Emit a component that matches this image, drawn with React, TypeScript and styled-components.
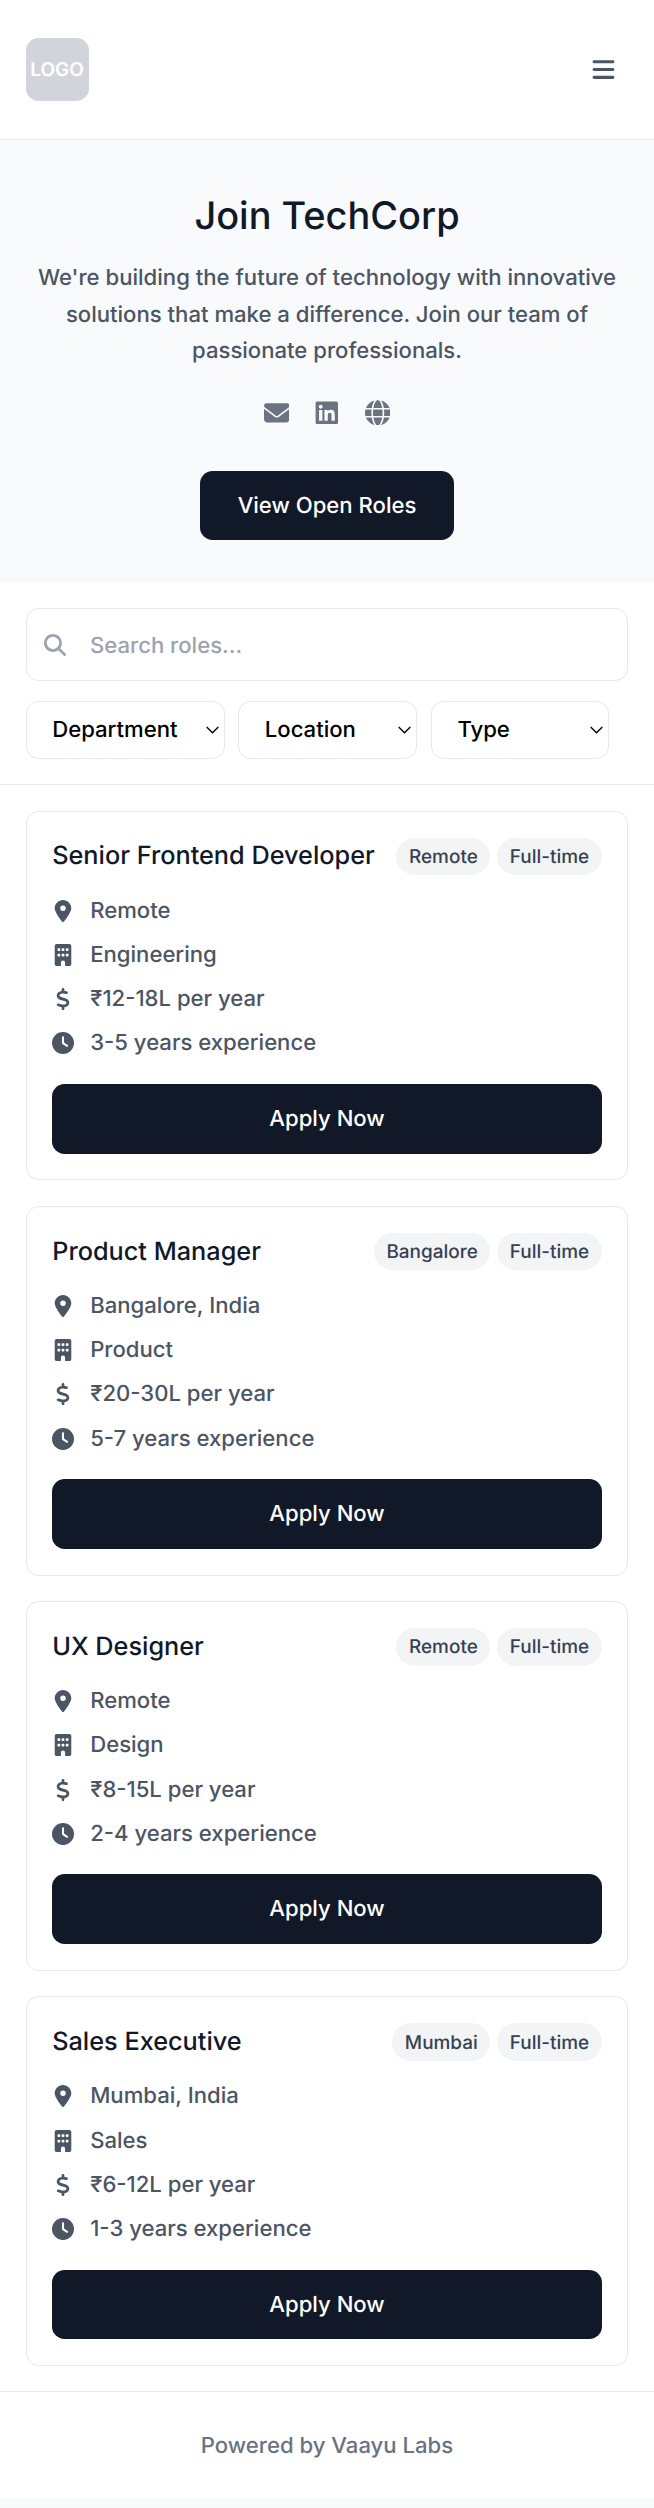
import React from 'react';
import styled, { createGlobalStyle } from 'styled-components';
import { FaBars, FaEnvelope, FaLinkedin, FaGlobe, FaMagnifyingGlass, FaLocationDot, FaBuilding, FaDollarSign, FaClock } from 'react-icons/fa6';

const Global = createGlobalStyle`
  html, body { margin: 0; padding: 0; background: #f9fafb; }
  body { font-family: Inter, "Noto Sans", sans-serif; min-height: 2508px; text-rendering: geometricPrecision; }
  * { box-sizing: border-box; }
`;
const Page = styled.div`background: #fff; width: 654px;`;
const Header = styled.header`
  height: 140px; padding: 38px 25.6px; display: flex; align-items: center; justify-content: space-between;
  border-bottom: 1.6px solid #e5e7eb;
`;
const Logo = styled.div`
  width: 63px; height: 63px; border-radius: 12.6px; background: #d1d5db; color: #fff;
  display: flex; align-items: center; justify-content: center; font-size: 18.96px; font-weight: 600; overflow: hidden;
`;
const MenuButton = styled.button`
  background: none; border: 0; padding: 0; color: #4b5563; display: flex; font-size: 25px; margin-right: 12px;
`;
const Hero = styled.section`
  background: #f9fafb; padding: 51.2px 25.6px 42.4px; text-align: center;
`;
const Title = styled.h1`
  margin: 0 0 17.6px; font-size: 37.92px; line-height: 51.2px; font-weight: 500; color: #111827;
`;
const Lead = styled.p`
  margin: 0 0 30px; font-size: 22.12px; line-height: 36.6px; font-weight: 500; color: #4b5563;
`;
const Socials = styled.div`
  display: flex; justify-content: center; gap: 25px; color: #6b7280; font-size: 25.6px; margin-bottom: 46px;
  svg { display: block; }
`;
const PrimaryLink = styled.a`
  display: flex; align-items: center; justify-content: center; height: 69px; width: 254px; margin: 0 auto;
  background: #111827; color: #fff; border-radius: 12.6px; font-size: 22.12px; font-weight: 550;
`;
const Filters = styled.section`
  padding: 25.6px; border-bottom: 1.6px solid #e5e7eb; display: flex; flex-direction: column; gap: 20px;
`;
const SearchBox = styled.div`
  height: 72.6px; border: 1.6px solid #e5e7eb; border-radius: 12.6px; display: flex; align-items: center;
  padding: 0 17px; gap: 24.4px; color: #9ca3af; font-size: 22px; background: #fff;
`;
const SearchInput = styled.input`
  flex: 1; border: 0; outline: 0; padding: 2px 0 0; font: 500 22.12px Inter, sans-serif; background: transparent;
  text-rendering: geometricPrecision;
  &::placeholder { color: #9ca3af; opacity: 1; }
`;
const SelectRow = styled.div`display: flex; gap: 13.6px;`;
const SelectWrap = styled.div<{ $w: number }>`
  position: relative; width: ${(p) => p.$w}px; height: 57.6px;
`;
const Select = styled.select`
  appearance: none; width: 100%; height: 100%; padding: 0 0 0 25.6px; border: 1.6px solid #e5e7eb; border-radius: 12.6px;
  background: #fff; color: #000; font: 500 22.12px Inter, sans-serif; text-rendering: geometricPrecision;
`;
const Chevron = styled.svg`
  position: absolute; right: 6px; top: 25px; width: 13px; height: 8px; pointer-events: none;
`;
const List = styled.main`
  padding: 25.6px; display: flex; flex-direction: column; gap: 25.6px;
`;
const Card = styled.article`
  border: 1.6px solid #e5e7eb; border-radius: 12.6px; padding: 25.6px; height: 369.6px; display: flex; flex-direction: column;
`;
const CardTop = styled.div`display: flex; justify-content: space-between; align-items: center; margin-bottom: 19.3px;`;
const CardTitle = styled.h2`margin: 0; padding-top: 1px; font-size: 25.28px; line-height: 37.4px; font-weight: 500; color: #111827;`;
const Tags = styled.div`display: flex; gap: 6.8px;`;
const Tag = styled.span`
  height: 37.4px; padding: 0 12.64px; display: flex; align-items: center; border-radius: 19px; background: #f3f4f6;
  color: #374151; font-size: 18.96px; font-weight: 500;
`;
const Rows = styled.div`display: flex; flex-direction: column; gap: 12.8px; margin-bottom: 25.1px;`;
const Row = styled.div`
  display: flex; align-items: center; gap: 16px; height: 31.4px; padding-top: 0.4px; font-size: 22.12px; font-weight: 500; color: #4b5563;
`;
const IconSlot = styled.span`width: 22px; display: flex; justify-content: flex-start; font-size: 22.12px; svg { display: block; }`;
const ApplyButton = styled.button`
  height: 69.8px; border: 0; width: 100%; background: #111827; color: #fff; border-radius: 12.6px;
  font: 550 22.12px Inter, sans-serif; flex: none; text-rendering: geometricPrecision;
`;
const Footer = styled.footer`
  border-top: 1.6px solid #e5e7eb; height: 108px; display: flex; align-items: center; justify-content: center;
  font-size: 22.12px; font-weight: 500; color: #6b7280;
`;

const jobs = [
  { title: 'Senior Frontend Developer', tag: 'Remote', loc: 'Remote', dept: 'Engineering', pay: '₹12-18L per year', exp: '3-5 years experience' },
  { title: 'Product Manager', tag: 'Bangalore', loc: 'Bangalore, India', dept: 'Product', pay: '₹20-30L per year', exp: '5-7 years experience' },
  { title: 'UX Designer', tag: 'Remote', loc: 'Remote', dept: 'Design', pay: '₹8-15L per year', exp: '2-4 years experience' },
  { title: 'Sales Executive', tag: 'Mumbai', loc: 'Mumbai, India', dept: 'Sales', pay: '₹6-12L per year', exp: '1-3 years experience' },
];

const FilterSelect = ({ w, label }: { w: number; label: string }) => (
  <SelectWrap $w={w}>
    <Select><option>{label}</option></Select>
    <Chevron viewBox="0 0 13 8" fill="none" stroke="#000" strokeWidth="1.4"><path d="M0.7 1 L6.5 6.8 L12.3 1" /></Chevron>
  </SelectWrap>
);

export default function App() {
  return (
    <Page>
      <Global />
      <Header>
        <Logo>LOGO</Logo>
        <MenuButton aria-label="Menu"><FaBars /></MenuButton>
      </Header>
      <Hero>
        <Title>Join TechCorp</Title>
        <Lead>We're building the future of technology with innovative solutions that make a difference. Join our team of passionate professionals.</Lead>
        <Socials><FaEnvelope /><FaLinkedin /><FaGlobe /></Socials>
        <PrimaryLink>View Open Roles</PrimaryLink>
      </Hero>
      <Filters>
        <SearchBox>
          <FaMagnifyingGlass />
          <SearchInput placeholder="Search roles..." />
        </SearchBox>
        <SelectRow>
          <FilterSelect w={199} label="Department" />
          <FilterSelect w={179} label="Location" />
          <FilterSelect w={178} label="Type" />
        </SelectRow>
      </Filters>
      <List>
        {jobs.map((j) => (
          <Card key={j.title}>
            <CardTop>
              <CardTitle>{j.title}</CardTitle>
              <Tags><Tag>{j.tag}</Tag><Tag>Full-time</Tag></Tags>
            </CardTop>
            <Rows>
              <Row><IconSlot><FaLocationDot /></IconSlot>{j.loc}</Row>
              <Row><IconSlot><FaBuilding /></IconSlot>{j.dept}</Row>
              <Row><IconSlot><FaDollarSign /></IconSlot>{j.pay}</Row>
              <Row><IconSlot><FaClock /></IconSlot>{j.exp}</Row>
            </Rows>
            <ApplyButton>Apply Now</ApplyButton>
          </Card>
        ))}
      </List>
      <Footer>Powered by Vaayu Labs</Footer>
    </Page>
  );
}
